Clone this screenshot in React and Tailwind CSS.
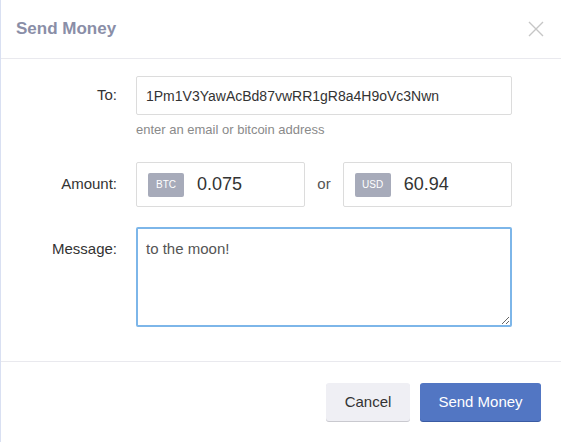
import React from 'react';

function CloseIcon() {
  return (
    <svg width="16" height="16" viewBox="0 0 16 16" fill="none" stroke="#c6c6c6" strokeWidth="1.4">
      <path d="M1 1L15 15M15 1L1 15" />
    </svg>
  );
}

function AmountBox({ unit, value }) {
  return (
    <div className="flex-1 h-[45px] flex items-center border border-[#dcdcdc] rounded-[2px] pl-[11px]">
      <span className="w-[36px] h-[24px] flex items-center justify-center rounded-[2px] bg-[#a7abba] text-white text-[10px]">
        {unit}
      </span>
      <span className="ml-[13px] text-[18px] text-[#333]">{value}</span>
    </div>
  );
}

export default function App() {
  return (
    <div
      className="w-[561px] h-[442px] bg-white border-l border-[#d9e0f2] flex flex-col"
      style={{ fontFamily: '"Liberation Sans", Arial, sans-serif' }}
    >
      <div className="h-[59px] shrink-0 flex items-center justify-between pl-[15px] pr-[17px] border-b border-[#e9e9ee]">
        <h2 className="text-[17px] font-bold text-[#8a8ea7]">Send Money</h2>
        <CloseIcon />
      </div>

      <div className="flex-1 pt-[17px] grid grid-cols-[116px_376px] gap-x-[19px] content-start">
        <label className="h-[39px] flex items-center justify-end text-[15px] text-[#333]">To:</label>
        <div>
          <input
            type="text"
            readOnly
            value="1Pm1V3YawAcBd87vwRR1gR8a4H9oVc3Nwn"
            className="w-full h-[39px] border border-[#dcdcdc] rounded-[2px] pl-[9px] text-[14px] text-[#333] outline-none"
          />
          <p className="mt-[7px] text-[13px] leading-[16px] text-[#8a8a8a]">enter an email or bitcoin address</p>
        </div>

        <label className="mt-[24px] h-[45px] flex items-center justify-end text-[15px] text-[#333]">Amount:</label>
        <div className="mt-[24px] flex items-center gap-[12px]">
          <AmountBox unit="BTC" value="0.075" />
          <span className="text-[15px] text-[#555]">or</span>
          <AmountBox unit="USD" value="60.94" />
        </div>

        <label className="mt-[20px] pt-[11px] text-right text-[15px] text-[#333]">Message:</label>
        <textarea
          readOnly
          defaultValue="to the moon!"
          className="mt-[20px] h-[100px] border-2 border-[#7db6e9] rounded-[2px] px-[8px] pt-[9px] text-[15px] text-[#555] outline-none"
        />
      </div>

      <div className="h-[81px] shrink-0 border-t border-[#e9e9ee] flex items-center justify-end gap-[10px] pr-[20px]">
        <button className="w-[84px] h-[38px] rounded-[3px] bg-[#efeff4] text-[15px] text-[#333] shadow-[0_1px_0_#c9c9cf]">
          Cancel
        </button>
        <button className="w-[121px] h-[38px] rounded-[3px] bg-[#5276c3] text-[15px] text-white shadow-[0_1px_0_#3a5ba3]">
          Send Money
        </button>
      </div>
    </div>
  );
}
